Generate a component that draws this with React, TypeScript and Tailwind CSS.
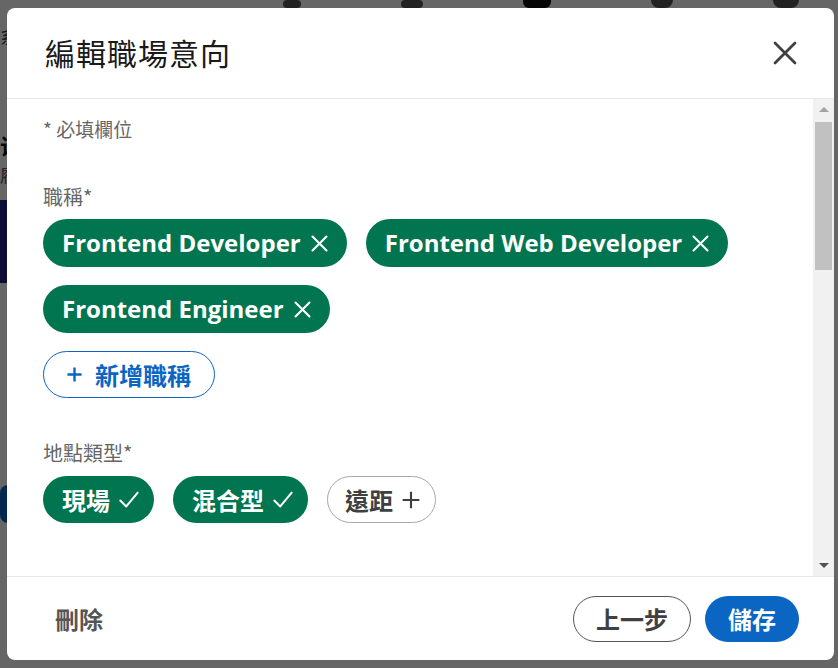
import React from 'react';

const latin = 'font-["Open_Sans","Noto_Sans_CJK_TC",sans-serif]';
const cjk = 'font-["Noto_Sans_CJK_TC","Noto_Sans",sans-serif]';

function XIcon({ className = '', width = 2 }: { className?: string; width?: number }) {
  return (
    <svg viewBox="0 0 24 24" className={className} fill="none" stroke="currentColor" strokeWidth={width} strokeLinecap="round">
      <path d="M4 4l16 16M20 4L4 20" />
    </svg>
  );
}

function CheckIcon({ className = '' }: { className?: string }) {
  return (
    <svg viewBox="0 0 24 24" className={className} fill="none" stroke="currentColor" strokeWidth="2.2" strokeLinecap="round" strokeLinejoin="round">
      <path d="M2.5 12.5l6.5 6.5L21.5 4" />
    </svg>
  );
}

function PlusIcon({ className = '', width = 2.4 }: { className?: string; width?: number }) {
  return (
    <svg viewBox="0 0 24 24" className={className} fill="none" stroke="currentColor" strokeWidth={width}>
      <path d="M12 2v20M2 12h20" />
    </svg>
  );
}

function TitlePill({ label }: { label: string }) {
  return (
    <span className={`inline-flex h-12 items-center gap-[8px] rounded-full bg-[#01754f] pl-[19px] pr-[17px] text-[24px] font-bold text-white ${latin}`}>
      {label}
      <XIcon className="h-[21px] w-[21px]" width={2.4} />
    </span>
  );
}

function TypePill({ label, selected }: { label: string; selected: boolean }) {
  if (selected) {
    return (
      <span className={`inline-flex h-[47px] items-center gap-2 rounded-full bg-[#01754f] pl-[19px] pr-[14px] text-[24px] font-bold text-white ${cjk}`}>
        {label}
        <CheckIcon className="h-[22px] w-[22px]" />
      </span>
    );
  }
  return (
    <span className={`inline-flex h-[47px] items-center gap-2 rounded-full border-[1.5px] border-[#a8a8a8] pl-[17px] pr-[14px] text-[24px] font-bold text-[#404040] ${cjk}`}>
      {label}
      <PlusIcon className="h-[20px] w-[20px]" width={2.6} />
    </span>
  );
}

function Scrollbar() {
  return (
    <div className="flex w-[21px] shrink-0 flex-col items-center bg-[#f1f1f1]">
      <div className="flex h-[21px] w-full items-center justify-center">
        <span className="h-0 w-0 border-x-[5px] border-b-[5px] border-x-transparent border-b-[#a3a3a3]" />
      </div>
      <div className="mt-[2px] h-[148px] w-[17px] bg-[#c1c1c1]" />
      <div className="flex-1" />
      <div className="flex h-[21px] w-full items-center justify-center">
        <span className="h-0 w-0 border-x-[5px] border-t-[5px] border-x-transparent border-t-[#505050]" />
      </div>
    </div>
  );
}

export default function App() {
  return (
    <div className="relative h-[668px] w-full overflow-hidden bg-white">
      {/* page behind the dialog */}
      <div className="flex h-[8px] items-start gap-[100px] pl-[283px]">
        <span className="h-[8px] w-[18px] rounded-sm bg-[#555]" />
        <span className="h-[8px] w-[22px] rounded-sm bg-[#555]" />
        <span className="h-[8px] w-[28px] rounded-b-md bg-[#111]" />
        <span className="h-[8px] w-[22px] rounded-b-full bg-[#555]" />
        <span className="h-[8px] w-[26px] rounded-b-full bg-[#555]" />
      </div>
      <div className="w-[40px] pt-[18px]">
        <div className={`h-[20px] text-[18px] leading-[20px] text-[#444] ${cjk}`}>系</div>
        <div className={`mt-[86px] h-[26px] text-[22px] font-bold leading-[26px] text-[#111] ${cjk}`}>访</div>
        <div className={`mt-[6px] h-[22px] text-[17px] leading-[22px] text-[#555] ${cjk}`}>履</div>
        <div className="mt-[14px] h-[83px] bg-[#20208a]" />
        <div className="h-[202px]" />
        <div className="h-[38px] rounded-l-lg bg-[#0a66c2]" />
      </div>

      <div className="absolute inset-0 bg-black/60" />

      <div className="absolute left-[7px] top-[8px] flex h-[652px] w-[827px] flex-col overflow-hidden rounded-lg bg-white">
        <div className="flex h-[91px] shrink-0 items-center justify-between border-b border-[#e8e8e8] pl-[38px] pr-[34px]">
          <h2 className={`pb-[2px] text-[30px] font-normal tracking-[1px] text-[#191919] ${cjk}`}>編輯職場意向</h2>
          <XIcon className="h-[30px] w-[30px] text-[#404040]" width={2.2} />
        </div>

        <div className="flex min-h-0 flex-1">
          <div className="min-w-0 flex-1 overflow-hidden pl-[36px] pt-[16px]">
            <p className={`text-[19px] leading-[28px] text-[#666] ${cjk}`}>* 必填欄位</p>

            <p className={`mt-[40px] text-[20px] leading-[28px] text-[#666] ${cjk}`}>職稱*</p>
            <div className="mt-[8px] flex flex-wrap gap-x-[19px] gap-y-[18px] pr-[40px]">
              <TitlePill label="Frontend Developer" />
              <TitlePill label="Frontend Web Developer" />
              <TitlePill label="Frontend Engineer" />
            </div>
            <button className={`mt-[18px] flex h-[47px] items-center gap-[12px] rounded-full border-[1.5px] border-[#0a66c2] pl-[22px] pr-[23px] text-[24px] font-bold text-[#0a66c2] ${cjk}`}>
              <PlusIcon className="h-[17px] w-[17px]" width={3.4} />
              新增職稱
            </button>

            <p className={`mt-[41px] text-[20px] leading-[28px] text-[#666] ${cjk}`}>地點類型*</p>
            <div className="mt-[9px] flex gap-x-[19px]">
              <TypePill label="現場" selected />
              <TypePill label="混合型" selected />
              <TypePill label="遠距" selected={false} />
            </div>
          </div>
          <Scrollbar />
        </div>

        <div className="flex h-[84px] shrink-0 items-center justify-between border-t border-[#e8e8e8] pl-[30px] pr-[35px]">
          <button className={`px-[18px] text-[24px] font-bold text-[#555] ${cjk}`}>刪除</button>
          <div className="flex items-center gap-[14px]">
            <button className={`h-[46px] rounded-full border-[1.5px] border-[#555] px-[22px] text-[24px] font-bold text-[#404040] ${cjk}`}>上一步</button>
            <button className={`h-[46px] rounded-full bg-[#0a66c2] px-[23px] text-[24px] font-bold text-white ${cjk}`}>儲存</button>
          </div>
        </div>
      </div>
    </div>
  );
}
